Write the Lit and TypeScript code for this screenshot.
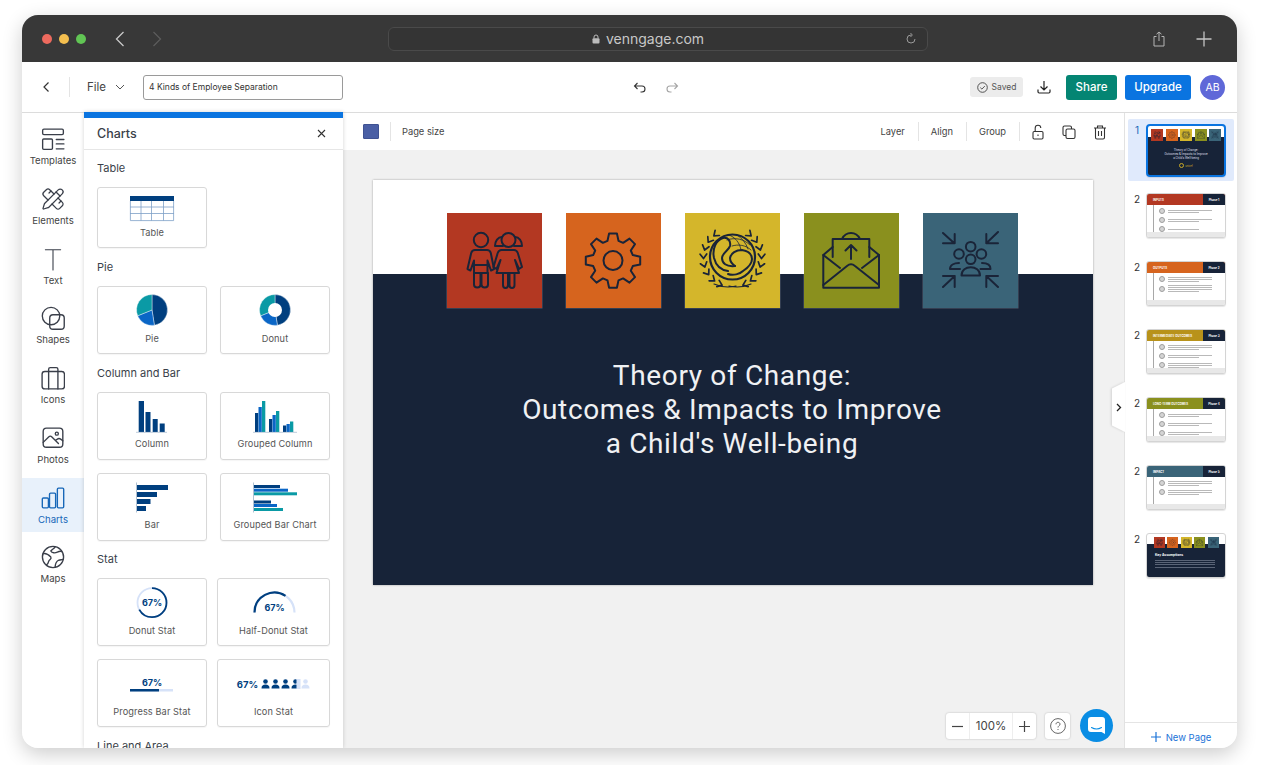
import { LitElement, html, css, svg } from "lit";
import { customElement } from "lit/decorators.js";

const NAVY = "#003f7f";
const BLUE = "#0a66c6";
const TEAL = "#0a9aa5";
const INK = "#1a2438";

function gearPath(cx: number, cy: number) {
  const pts: string[] = [];
  for (let i = 0; i < 8; i++) {
    const a = (i * Math.PI) / 4 - Math.PI / 2;
    const step = 0.2;
    const add = (r: number, d: number) =>
      pts.push(`${(cx + r * Math.cos(a + d)).toFixed(1)} ${(cy + r * Math.sin(a + d)).toFixed(1)}`);
    add(20.5, -0.27);
    add(27.5, -step * 0.72);
    add(27.5, step * 0.72);
    add(20.5, 0.27);
  }
  return "M" + pts.join("L") + "Z";
}

function laurel(s: number) {
  const cx = 47.5;
  const cy = 45;
  const r = 29;
  let d = "";
  for (let deg = -50; deg <= 72; deg += 17) {
    const a = (deg * Math.PI) / 180;
    const px = cx + s * r * Math.cos(a);
    const py = cy + r * Math.sin(a);
    const tx = s * Math.sin(a);
    const ty = -Math.cos(a);
    const nx = s * Math.cos(a);
    const ny = Math.sin(a);
    for (const k of [0.75, -0.75]) {
      const dx = tx + k * nx;
      const dy = ty + k * ny;
      const l = Math.hypot(dx, dy);
      d += `M${px.toFixed(1)} ${py.toFixed(1)}l${((dx / l) * 5.5).toFixed(1)} ${((dy / l) * 5.5).toFixed(1)}`;
    }
  }
  return svg`<path d=${d} stroke-width="1.700"/>`;
}

const slideIcons = [
  {
    bg: "#b33822",
    art: svg`
      <circle cx="34" cy="27" r="7.200"/>
      <path d="M28 37h12c2 0 3.200 1 3.800 3L47 56l-3 1.500-3.500-10V60H27V47.500l-3.500 10-3-1.500 3.700-16c.6-2 1.800-3 3.800-3z"/>
      <path d="M27 52h13.500M27 60v11.500c0 4 6.500 4 6.500 0V61M34.500 61v10.500c0 4 6.500 4 6.500 0V60"/>
      <circle cx="61.500" cy="27" r="7"/>
      <path d="M55 24c-4 0-7 4-7 9h8M68 24c4 0 7 4 7 9h-8"/>
      <path d="M56 37h11c2 0 3 1 3.800 3l4.200 14-3 2-4-9 4 13H49.500l4-13-4 9-3-2 4.200-14c.8-2 2-3 3.800-3z"/>
      <path d="M56 60v12c0 4 5 4 5 0V60M62.500 60v12c0 4 5 4 5 0V60"/>`,
  },
  {
    bg: "#d6641e",
    art: svg`<path d="${gearPath(47, 47.6)}"/><circle cx="47" cy="47.600" r="9.500"/>`,
  },
  {
    bg: "#d4b62b",
    art: svg`
      <circle cx="47.500" cy="44" r="22.500" stroke-width="2.200"/>
      <path stroke-width="2" d="M43 58c-7-1-12-5-14-13-2-9 2-18 9-20 5-1 8 3 7 8-1 4-8 7-8 12 0 5 4 9 13 8"/>
      <path stroke-width="2" d="M50 53c-3-2-5-5-5-8 1-5 6-8 12-8 6 1 10 4 10 9 0 5-3 8-9 12-3 3-10 5-15 3"/>
      <path stroke-width=".8" d="M44 22c6 2 11 8 12 15M52 22c5 3 9 8 11 14M42 27c8-3 17-1 23 5M47 33c6-2 14-1 19 4"/>
      ${laurel(-1)}${laurel(1)}
      <path stroke-width="1.200" d="M29 71c7 3 14 4 22 2M66 71c-7 3-14 4-22 2"/>`,
  },
  {
    bg: "#8a901e",
    art: svg`
      <path d="M19.300 42v32.700H75V42M19.300 42l9.400-8M75 42l-9.700-8"/>
      <path d="M19.300 72L43 53c3-2.500 5-2.500 8 0l24 19M19.300 42L36 55M75 42L58 55"/>
      <path d="M28.700 44V26h36.600v18M38 26c4-8 14-8 18 0"/>
      <path d="M47 46V32M41.500 37.500L47 32l5.500 5.500"/>`,
  },
  {
    bg: "#3a6478",
    art: svg`
      <circle cx="47.700" cy="33.700" r="4.800"/><circle cx="36" cy="41" r="4.800"/><circle cx="58.400" cy="41" r="4.800"/><circle cx="47.700" cy="46.300" r="4.800"/>
      <path d="M38.500 62.500c0-11 18.500-11 18.500 0zM36 50c-5 0-9 2-9 6h10M59 50c5 0 8.500 2 8.500 6h-10"/>
      <path d="M20 20l11 10M31.700 21v9.300H20M75 19L63.300 30.300M63.300 21v9.300H75M20 74l11.700-11M20 63h11.700v11M75 74L63.300 63M75 63H63.300v11"/>`,
  },
];

function slideIcon(i: number, size: number) {
  const ic = slideIcons[i];
  return html`<svg class="sicon" style="background:${ic.bg}" width=${size} height=${size} viewBox="0 0 95 95" fill="none" stroke=${INK} stroke-width="2" stroke-linejoin="round" stroke-linecap="round">${ic.art}</svg>`;
}

const side = [
  { label: "Templates", art: svg`<rect x="1.500" y="2" width="19" height="5" rx="1.200"/><rect x="1.500" y="11" width="9" height="9.500" rx="1"/><path d="M14 11.500h7M14 15.500h7M14 20h7"/>`, vb: "0 0 22 22" },
  { label: "Elements", art: svg`<g transform="scale(.96)"><path d="M13 7 8.700 2.700a2.410 2.410 0 0 0-3.400 0L2.700 5.300a2.410 2.410 0 0 0 0 3.400L7 13"/><path d="m8 6 2-2"/><path d="m18 16 2-2"/><path d="m17 11 4.300 4.300c.94.94.94 2.460 0 3.400l-2.600 2.600c-.94.94-2.460.94-3.400 0L11 17"/><path d="M21.174 6.812a1 1 0 0 0-3.986-3.987L3.842 16.174a2 2 0 0 0-.5.83l-1.321 4.352a.5.5 0 0 0 .623.622l4.353-1.320a2 2 0 0 0 .83-.497z"/><path d="m15 5 4 4"/></g>`, vb: "0 0 23 23" },
  { label: "Text", art: svg`<path d="M4 2.500h14M11 2.500v18.500"/>`, vb: "0 0 22 22", thin: true },
  { label: "Shapes", art: svg`<circle cx="9.200" cy="9.200" r="8"/><rect x="8" y="8" width="13.300" height="13.300" rx="3"/>`, vb: "0 0 22 22" },
  { label: "Icons", art: svg`<rect x="1" y="5" width="20.500" height="16" rx="2.500"/><path d="M7 5v16M15.500 5v16M7 5V3c0-1 .6-1.500 1.500-1.500h5.500c1 0 1.500.5 1.500 1.500v2"/>`, vb: "0 0 22 22" },
  { label: "Photos", art: svg`<rect x="2" y="2" width="18" height="17.500" rx="3"/><path d="M2 15l5-5c1-1 2-1 3 0l6 6 M13.500 13l1.500-1c1-.7 2-.7 3 0l2 1.500"/><circle cx="14.500" cy="7" r="1.400"/>`, vb: "0 0 22 22" },
  { label: "Charts", art: svg`<rect x="1.200" y="11" width="5.600" height="9" rx="1"/><rect x="7.800" y="6.500" width="5.600" height="13.500" rx="1"/><rect x="15" y="2" width="5.800" height="18" rx="1"/>`, vb: "0 0 22 22", active: true },
  { label: "Maps", art: svg`<circle cx="11" cy="11" r="9.700"/><path d="M2 8c3-1 5 1 7 3 1 2-1 2-2 4-.5 2-1 3-2 3M13 1.500c-1 2-3 2.500-4 4 1 2 4 2 6 1 2-1 3-1 4-.5M13 20.500c0-3 .5-5 3-6.500 2-1 3.500 0 4.500-1"/>`, vb: "0 0 22 22" },
];

type Card = { label: string; h: number; art: unknown; foot?: number };

function axisBars(list: [number, number, number, number, string][]) {
  return list.map(([x, y, w, h, c]) => svg`<rect x=${x} y=${y} width=${w} height=${h} fill=${c}/>`);
}

function wedge(cx: number, cy: number, r: number, a0: number, a1: number) {
  const p = (a: number) => `${(cx + r * Math.sin((a * Math.PI) / 180)).toFixed(2)} ${(cy - r * Math.cos((a * Math.PI) / 180)).toFixed(2)}`;
  return `M${cx} ${cy}L${p(a0)}A${r} ${r} 0 ${a1 - a0 > 180 ? 1 : 0} 1 ${p(a1)}Z`;
}

function person(x: number, c: string) {
  return svg`<g transform="translate(${x} 0)" fill=${c}><circle cx="4" cy="2.500" r="2.300"/><path d="M0 9.500c0-3 1.500-4 4-4s4 1 4 4z"/></g>`;
}

const pieArt = (cx: number, hole: boolean) => svg`
  <path d="${wedge(cx, 23, 15.5, 0, 171)}" fill=${NAVY} stroke="#fff" stroke-width=".4"/>
  <path d="${wedge(cx, 23, 15.5, 171, 248)}" fill=${BLUE} stroke="#fff" stroke-width=".4"/>
  <path d="${wedge(cx, 23, 15.5, 248, 360)}" fill=${TEAL} stroke="#fff" stroke-width=".4"/>
  ${hole ? svg`<circle cx=${cx} cy="23" r="7" fill="#fff"/>` : ""}`;

const statText = (x: number, y: number, size = 9) =>
  svg`<text x=${x} y=${y} text-anchor="middle" font-family="Inter, sans-serif" font-weight="700" font-size=${size} fill=${NAVY}>67%</text>`;

const groups: { title: string; cols: string; tight?: boolean; first?: boolean; cards: Card[] }[] = [
  {
    title: "Table",
    cols: "pair",
    first: true,
    cards: [
      {
        label: "Table",
        h: 61,
        art: svg`
          <rect x="32" y="8" width="44" height="5" fill=${NAVY}/>
          <path fill="none" stroke="#7d9fc6" stroke-width=".8" d="M32.400 13v19.600h43.200V13M32 19h44M32 25.500h44M43 13v19.600M53.500 13v19.600M65.500 13v19.600"/>`,
      },
    ],
  },
  {
    title: "Pie",
    cols: "pair",
    cards: [
      { label: "Pie", h: 68, art: pieArt(54, false) },
      { label: "Donut", h: 68, art: pieArt(54, true) },
    ],
  },
  {
    title: "Column and Bar",
    cols: "pair",
    cards: [
      {
        label: "Column",
        h: 68,
        foot: 23,
        art: svg`${axisBars([
          [40.7, 8, 5.3, 31, NAVY],
          [47.5, 19, 5, 20, NAVY],
          [54.7, 26, 5, 13, NAVY],
          [61.7, 30.5, 5, 8.5, NAVY],
        ])}<path d="M38 39.300h31" stroke="#8ea6bf" stroke-width=".6"/>`,
      },
      {
        label: "Grouped Column",
        h: 68,
        foot: 23,
        art: svg`${axisBars([
          [34, 20, 3.3, 19, NAVY],
          [37.5, 14, 3.3, 25, BLUE],
          [41, 8, 3.3, 31, TEAL],
          [48, 26, 3.3, 13, NAVY],
          [51.500, 22, 3.3, 17, BLUE],
          [55, 18, 3.3, 21, TEAL],
          [62, 32.5, 3.3, 6.5, NAVY],
          [65.500, 31, 3.3, 8, BLUE],
          [69, 28.500, 3.3, 10.5, TEAL],
        ])}<path d="M32 39.300h44" stroke="#8ea6bf" stroke-width=".6"/>`,
      },
      {
        label: "Bar",
        h: 68,
        foot: 23,
        art: svg`${axisBars([
          [39, 11, 31, 5, NAVY],
          [39, 18, 20, 5, NAVY],
          [39, 25, 13.5, 5, NAVY],
          [39, 32, 9, 5, NAVY],
        ])}<path d="M38.500 8.500v30" stroke="#8ea6bf" stroke-width=".7"/>`,
      },
      {
        label: "Grouped Bar Chart",
        h: 68,
        foot: 23,
        art: svg`${axisBars([
          [33, 11, 26, 3, NAVY],
          [33, 14.7, 34, 3, BLUE],
          [33, 18.300, 43, 3, TEAL],
          [33, 26.500, 17, 3, NAVY],
          [33, 30, 23, 3, BLUE],
          [33, 34, 29, 3, TEAL],
        ])}<path d="M32.500 8.500v30" stroke="#8ea6bf" stroke-width=".7"/>`,
      },
    ],
  },
  {
    title: "Stat",
    cols: "stat",
    tight: true,
    cards: [
      {
        label: "Donut Stat",
        h: 68,
        art: svg`
          <circle cx="54" cy="23.700" r="14.500" fill="none" stroke="#d6e2f8" stroke-width="1.800"/>
          <circle cx="54" cy="23.700" r="14.500" fill="none" stroke=${NAVY} stroke-width="1.800" pathLength="100" stroke-dasharray="67 33" transform="rotate(-90 54 23.700)"/>
          ${statText(54, 27)}`,
      },
      {
        label: "Half-Donut Stat",
        h: 68,
        art: svg`
          <path d="M35 33.500a20 20 0 0 1 40 0" fill="none" stroke="#d6e2f8" stroke-width="2.200"/>
          <path d="M35 33.500a20 20 0 0 1 31-16.700" fill="none" stroke=${NAVY} stroke-width="2.200"/>
          ${statText(55, 31.500)}`,
      },
      {
        label: "Progress Bar Stat",
        h: 68,
        art: svg`
          <rect x="32" y="29" width="43" height="2.500" fill="#d6e2f8"/>
          <rect x="32" y="29" width="29" height="2.500" fill=${NAVY}/>
          ${statText(54, 25.500)}`,
      },
      {
        label: "Icon Stat",
        h: 68,
        art: svg`
          ${statText(28, 27.500, 9.5)}
          <g transform="translate(42 19)">
            ${person(0, NAVY)}${person(10, NAVY)}${person(20, NAVY)}${person(30, NAVY)}
            <rect x="35" y="0" width="4" height="10" fill="#d6e2f8"/>
            ${person(40, "#d6e2f8")}
          </g>`,
      },
    ],
  },
];

const thumbs = [
  { title: "INPUTS", color: "#b33822", phase: "Phase 1", rows: [2, 2, 1] },
  { title: "OUTPUTS", color: "#d6641e", phase: "Phase 2", rows: [3, 4] },
  { title: "INTERMEDIATE OUTCOMES", color: "#b8921a", phase: "Phase 3", rows: [3, 2, 3] },
  { title: "LONG-TERM OUTCOMES", color: "#8a901e", phase: "Phase 4", rows: [2, 2, 2] },
  { title: "IMPACT", color: "#3a6478", phase: "Phase 5", rows: [3, 3] },
];

@customElement("app-root")
export class AppRoot extends LitElement {
  static styles = css`
    :host {
      display: block;
      width: 1261px;
      height: 765px;
      background: #fff;
      font-family: Inter, "Noto Sans", sans-serif;
      color: #3a3f4a;
      overflow: hidden;
    }
    .page { padding: 15px 24px 17px 22px; height: 733px; }
    .win {
      height: 733px;
      border-radius: 16px;
      overflow: hidden;
      display: flex;
      flex-direction: column;
      background: #f1f1f1;
      box-shadow: 0 6px 20px rgba(0, 0, 0, 0.2);
      position: relative;
    }
    .chrome {
      height: 47px;
      flex: none;
      background: #383838;
      display: flex;
      align-items: center;
      padding-left: 20px;
      box-sizing: border-box;
    }
    .dot { width: 10px; height: 10px; border-radius: 50%; margin-right: 7px; }
    .nav { margin-left: 22px; display: block; }
    .nav + .nav { margin-left: 27px; }
    .url {
      margin-left: 226px;
      width: 540px;
      height: 24px;
      box-sizing: border-box;
      border: 1px solid #4a4a4a;
      border-radius: 6px;
      background: #343434;
      display: flex;
      align-items: center;
      justify-content: center;
      position: relative;
      color: #c8c8c8;
      font-size: 14px;
      gap: 6px;
      padding-right: 20px;
    }
    .url .reload { position: absolute; right: 9px; top: 4px; }
    .chrome-end { margin-left: 224px; display: flex; align-items: center; gap: 30px; }

    .top {
      height: 51px;
      flex: none;
      background: #fff;
      border-bottom: 1px solid #dcdcdc;
      box-sizing: border-box;
      display: flex;
      align-items: center;
      padding-left: 20px;
    }
    .tsep { width: 1px; height: 20px; background: #e4e4e4; margin: 0 17px 0 18px; }
    .file { font-size: 11.5px; color: #444; margin-right: 9px; }
    .doc {
      margin-left: 18px;
      width: 200px;
      height: 25px;
      box-sizing: border-box;
      border: 1px solid #9a9a9a;
      border-radius: 3px;
      display: flex;
      align-items: center;
      padding-left: 5px;
      font-size: 8.5px;
      color: #333;
    }
    .undo { margin-left: 290px; display: flex; gap: 18px; }
    .right { margin-left: auto; display: flex; align-items: center; padding-right: 12px; }
    .saved {
      width: 53px;
      height: 20px;
      background: #ececec;
      border-radius: 3px;
      display: flex;
      align-items: center;
      justify-content: center;
      gap: 4px;
      font-size: 8.5px;
      color: #555;
    }
    .dl { margin: 0 15px 0 14px; display: block; }
    .btn {
      height: 25px;
      border-radius: 3px;
      color: #fff;
      font-size: 11.5px;
      font-weight: 500;
      display: flex;
      align-items: center;
      justify-content: center;
    }
    .share { width: 51px; background: #048573; margin-right: 8px; }
    .upgrade { width: 66px; background: #0a74e0; margin-right: 9px; }
    .avatar {
      width: 25px;
      height: 25px;
      border-radius: 50%;
      background: #5f68d8;
      color: #fff;
      font-size: 10.5px;
      display: flex;
      align-items: center;
      justify-content: center;
    }

    .body { flex: 1; display: flex; min-height: 0; }
    .side {
      width: 62px;
      flex: none;
      background: #fff;
      padding-top: 6px;
      box-sizing: border-box;
      display: flex;
      flex-direction: column;
      gap: 5.75px;
    }
    .sitem {
      height: 54px;
      display: flex;
      flex-direction: column;
      align-items: center;
      justify-content: flex-end;
      padding-bottom: 6px;
      box-sizing: border-box;
      font-size: 9.6px;
      line-height: 12px;
      color: #444;
      gap: 4px;
    }
    .sitem.on { background: #e8f1fb; color: #1767b8; }
    .sitem svg { display: block; }

    .panel {
      width: 259px;
      flex: none;
      background: #fff;
      border-top: 6px solid #0a74e0;
      box-sizing: border-box;
      overflow: hidden;
      box-shadow: 0 0 4px rgba(0, 0, 0, 0.18);
      position: relative;
      z-index: 1;
      margin-top: -1px;
    }
    .phead {
      height: 31px;
      border-bottom: 1px solid #e6e6e6;
      display: flex;
      align-items: center;
      justify-content: space-between;
      padding: 0 17px 0 13px;
      font-size: 12.5px;
      font-weight: 500;
      color: #3a3f4a;
    }
    .pbody { padding: 0 13px; }
    .gt { font-size: 11px; color: #3a3f4a; line-height: 14px; margin: 12px 0 12px; }
    .gt.first, .gt.tight { margin-top: 11px; }
    .grid { display: grid; grid-template-columns: 110px 110px; gap: 13px; row-gap: 13px; }
    .grid.stat { grid-template-columns: 110px 113px; column-gap: 10px; }
    .card {
      border: 1px solid #d8d8d8;
      border-radius: 3px;
      box-sizing: border-box;
      position: relative;
      overflow: hidden;
      box-shadow: 0 1px 1px rgba(0, 0, 0, 0.04);
    }
    .card svg { display: block; width: 100%; }
    .card span {
      display: block;
      text-align: center;
      font-size: 9.2px;
      line-height: 12px;
      color: #555;
      letter-spacing: 0.1px;
    }

    .main { flex: 1; min-width: 0; display: flex; flex-direction: column; position: relative; }
    .ctool {
      height: 37px;
      flex: none;
      background: #fff;
      display: flex;
      align-items: center;
      padding-left: 20px;
      font-size: 9.3px;
      color: #444;
    }
    .swatch { width: 16px; height: 15px; background: #4a5fa5; border-radius: 1px; border: 1px solid #3f5292; box-sizing: border-box; }
    .csep { width: 1px; height: 19px; background: #e4e4e4; }
    .ctool .right { padding-right: 16px; }
    .ctool .lbl { padding: 0 13px 0 12px; }
    .ctool svg { display: block; }
    .tools { display: flex; gap: 15px; padding-left: 10px; }
    .stage { flex: 1; padding: 30px 0 0 30px; }
    .slide {
      width: 720px;
      height: 405px;
      box-sizing: border-box;
      background: linear-gradient(#fff 94px, #172338 94px);
      box-shadow: 0 0 2px rgba(0, 0, 0, 0.35);
      padding: 33px 0 0 74px;
      color: #f0f1f3;
    }
    .srow { display: flex; gap: 24px; }
    .sicon { display: block; flex: none; box-shadow: 0 0 0 .5px rgba(255, 255, 255, 0.25); }
    .stitle {
      margin: 51px 0 0 -76px;
      text-align: center;
      font-family: Roboto, sans-serif;
      font-size: 28px;
      line-height: 34px;
      letter-spacing: 0.65px;
    }

    .rail {
      width: 113px;
      flex: none;
      background: #fff;
      border-left: 1px solid #e2e2e2;
      box-sizing: border-box;
      display: flex;
      flex-direction: column;
      position: relative;
    }
    .tabs { flex: 1; padding: 6px 3px 0 3px; }
    .tr { display: flex; margin-bottom: 23px; height: 45px; }
    .tr.first { background: #e0eafc; height: 62px; border-radius: 2px; padding-top: 5px; box-sizing: border-box; margin-bottom: 12px; }
    .tr b { width: 18px; font-weight: 400; font-size: 10px; color: #333; text-align: center; padding-top: 0; line-height: 12px; }
    .tr.first b { color: #1767b8; }
    .th {
      width: 80px;
      height: 45px;
      box-sizing: border-box;
      border: 1px solid #d4d4d4;
      border-radius: 3px;
      overflow: hidden;
      background: #fff;
      display: flex;
      flex-direction: column;
      box-shadow: 0 1px 1px rgba(0, 0, 0, 0.1);
      flex: none;
    }
    .thd { height: 11px; flex: none; display: flex; align-items: center; color: #fff; font-size: 2.9px; font-weight: 700; padding-left: 6px; }
    .thd i { margin-left: auto; width: 22px; height: 100%; background: #172338; font-style: normal; display: flex; align-items: center; justify-content: center; font-size: 2.9px; }
    .tbd { flex: 1; margin-left: 6px; border-left: 1px solid #a8a8a8; padding: 3px 0 0 5px; display: flex; flex-direction: column; gap: 3px; }
    .trow { display: flex; gap: 3px; align-items: center; }
    .tdot { width: 6px; height: 6px; border-radius: 50%; border: 1px solid #9f9f9f; background: #d4d4d4; box-sizing: border-box; flex: none; }
    .tl { display: flex; flex-direction: column; gap: 1px; width: 44px; }
    .tl u { display: block; height: 1px; background: #b9b9b9; }
    .tft { height: 5px; background: #e8e8e8; flex: none; }
    .th.dark { background: linear-gradient(#fff 10px, #172338 10px); color: #fff; }
    .first .th { height: 53px; border: 2px solid #0a74e0; border-radius: 4px; width: 80px; background: linear-gradient(#fff 11px, #172338 11px); }
    .mini { display: flex; gap: 2.500px; padding-top: 3px; justify-content: center; }
    .mini .sicon { box-shadow: none; }
    .mt { font-family: Roboto, sans-serif; font-size: 3px; line-height: 4px; text-align: center; margin-top: 7px; color: #d8dbe0; }
    .logo { display: flex; align-items: center; justify-content: center; gap: 1px; margin-top: 3px; font-size: 2.6px; color: #c9a926; }
    .logo em { display: block; width: 5px; height: 5px; border: 1px solid #c9a926; border-radius: 50%; box-sizing: border-box; }
    .ka { font-size: 3.3px; font-weight: 700; padding: 5px 0 3px 8px; }
    .kl { margin: 0 10px 1.500px 8px; height: .7px; background: #5a6477; }
    .newp {
      height: 26px;
      flex: none;
      border-top: 1px solid #e4e4e4;
      display: flex;
      align-items: center;
      justify-content: center;
      gap: 5px;
      color: #1a73d8;
      font-size: 9.5px;
      padding-top: 3px;
      box-sizing: border-box;
    }
    .handle {
      position: absolute;
      left: -13px;
      top: 269px;
      filter: drop-shadow(-1px 0 1px rgba(0, 0, 0, 0.12));
    }
    .handle div {
      width: 13px;
      height: 50px;
      background: #fff;
      clip-path: polygon(100% 0, 0 13%, 0 87%, 100% 100%);
      display: flex;
      align-items: center;
      justify-content: center;
    }
    .zoom {
      position: absolute;
      left: 603px;
      top: 600px;
      height: 26px;
      display: flex;
      align-items: center;
      gap: 9px;
    }
    .zg {
      display: flex;
      height: 26px;
      width: 90px;
      background: #fff;
      border-radius: 3px;
      box-shadow: 0 0 2px rgba(0, 0, 0, 0.25);
      font-size: 11.5px;
      color: #444;
    }
    .zg div { display: flex; align-items: center; justify-content: center; }
    .zb { width: 23px; flex: none; }
    .zp { flex: 1; border-left: 1px solid #eee; border-right: 1px solid #eee; }
    .help {
      width: 25px;
      height: 26px;
      background: #fff;
      border-radius: 3px;
      box-shadow: 0 0 2px rgba(0, 0, 0, 0.25);
      display: flex;
      align-items: center;
      justify-content: center;
    }
    .chat {
      width: 33px;
      height: 33px;
      border-radius: 50%;
      background: #0a8de4;
      display: flex;
      align-items: center;
      justify-content: center;
      margin-left: 1px;
      margin-top: -1px;
    }
  `;

  private renderThumb(t: (typeof thumbs)[number]) {
    return html`<div class="th">
      <div class="thd" style="background:${t.color}">${t.title}<i>${t.phase}</i></div>
      <div class="tbd">
        ${t.rows.map(
          (n) => html`<div class="trow"><div class="tdot"></div>
            <div class="tl">${Array.from({ length: n }, (_, i) => html`<u style="width:${i === n - 1 ? 70 : 100}%"></u>`)}</div></div>`
        )}
      </div>
      <div class="tft"></div>
    </div>`;
  }

  render() {
    return html`<div class="page"><div class="win">
      <div class="chrome">
        <div class="dot" style="background:#ed6a5e"></div>
        <div class="dot" style="background:#f4bf4f"></div>
        <div class="dot" style="background:#61c554"></div>
        <svg class="nav" width="10" height="16" viewBox="0 0 10 16" fill="none" stroke="#c9c9c9" stroke-width="1.300"><path d="M8.500 1L1.500 8l7 7"/></svg>
        <svg class="nav" width="10" height="16" viewBox="0 0 10 16" fill="none" stroke="#5c5c5c" stroke-width="1.300"><path d="M1.500 1l7 7-7 7"/></svg>
        <div class="url">
          <svg width="8" height="10" viewBox="0 0 8 10"><path d="M2 4.500V3a2 2 0 0 1 4 0v1.500" fill="none" stroke="#bbb"/><rect x=".5" y="4.300" width="7" height="5.200" rx="1" fill="#bbb"/></svg>
          venngage.com
          <svg class="reload" width="14" height="14" viewBox="0 0 14 14" fill="none" stroke="#9a9a9a"><path d="M7 3a4 4 0 1 0 4 4M6.500 1L8.300 3 6.500 5"/></svg>
        </div>
        <div class="chrome-end">
          <svg width="14" height="16" viewBox="0 0 14 16" fill="none" stroke="#b4b4b4"><path d="M4.500 5.500H2v9.500h10V5.500H9.500M7 10V1M4.500 3.200L7 1l2.500 2.200"/></svg>
          <svg width="16" height="16" viewBox="0 0 16 16" fill="none" stroke="#c4c4c4" stroke-width="1.300"><path d="M8 .5v15M.5 8h15"/></svg>
        </div>
      </div>

      <div class="top">
        <svg width="9" height="12" viewBox="0 0 9 12" fill="none" stroke="#333" stroke-width="1.200"><path d="M6.500 1.500L2 6l4.500 4.500"/></svg>
        <div class="tsep"></div>
        <span class="file">File</span>
        <svg width="10" height="6" viewBox="0 0 10 6" fill="none" stroke="#555"><path d="M1 1l4 4 4-4"/></svg>
        <div class="doc">4 Kinds of Employee Separation</div>
        <div class="undo">
          <svg width="14" height="12" viewBox="0 0 14 12" fill="none" stroke="#333" stroke-width="1.100"><path d="M4.500 2L1.500 5l3 3M1.500 5H9a3 3 0 0 1 0 6H7.500"/></svg>
          <svg width="14" height="12" viewBox="0 0 14 12" fill="none" stroke="#a5a5a5" stroke-width="1.100"><path d="M9.500 2l3 3-3 3M12.500 5H5a3 3 0 0 0 0 6h1.500"/></svg>
        </div>
        <div class="right">
          <div class="saved">
            <svg width="11" height="11" viewBox="0 0 11 11" fill="none" stroke="#444" stroke-width=".9"><circle cx="5.500" cy="5.500" r="4.800"/><path d="M3.300 5.600l1.600 1.500 2.900-3"/></svg>
            Saved
          </div>
          <svg class="dl" width="14" height="14" viewBox="0 0 14 14" fill="none" stroke="#222" stroke-width="1.200"><path d="M7 1v8.500M3.500 6.500L7 10l3.500-3.500M1 9.500v2.300c0 .7.500 1.200 1.200 1.200h9.600c.7 0 1.200-.5 1.200-1.200V9.500"/></svg>
          <div class="btn share">Share</div>
          <div class="btn upgrade">Upgrade</div>
          <div class="avatar">AB</div>
        </div>
      </div>

      <div class="body">
        <div class="side">
          ${side.map(
            (s) => html`<div class="sitem ${s.active ? "on" : ""}">
              <svg width="24" height="24" viewBox=${s.vb} fill="none" stroke=${s.active ? "#1767b8" : "#3a3f4a"} stroke-width=${s.thin ? 1 : 1.250} stroke-linecap="round" stroke-linejoin="round">${s.art}</svg>
              ${s.label}
            </div>`
          )}
        </div>

        <div class="panel">
          <div class="phead">Charts
            <svg width="9" height="9" viewBox="0 0 9 9" fill="none" stroke="#333" stroke-width="1.100"><path d="M1 1l7 7M8 1L1 8"/></svg>
          </div>
          <div class="pbody">
            ${groups.map(
              (g) => html`<div class="gt ${g.first ? "first" : ""} ${g.tight ? "tight" : ""}">${g.title}</div>
                <div class="grid ${g.cols}">
                  ${g.cards.map(
                    (c) => html`<div class="card" style="height:${c.h}px">
                      <svg height=${c.h - (c.foot ?? 22)} viewBox="0 0 108 ${c.h - (c.foot ?? 22)}">${c.art}</svg>
                      <span>${c.label}</span>
                    </div>`
                  )}
                </div>`
            )}
            <div class="gt">Line and Area</div>
          </div>
        </div>

        <div class="main">
          <div class="ctool">
            <div class="swatch"></div>
            <div class="csep" style="margin:0 11px"></div>
            Page size
            <div class="right">
              <span class="lbl">Layer</span><div class="csep"></div>
              <span class="lbl">Align</span><div class="csep"></div>
              <span class="lbl">Group</span><div class="csep"></div>
              <div class="tools">
                <svg width="16" height="16" viewBox="0 0 16 16" fill="none" stroke="#333" stroke-width="1.100"><rect x="3" y="7.500" width="10" height="7.500" rx="1.200"/><path d="M5.200 7.500V4a2.800 2.800 0 0 1 5.600 0M8 10.500v1.500"/></svg>
                <svg width="16" height="16" viewBox="0 0 16 16" fill="none" stroke="#333" stroke-width="1.100"><rect x="5" y="5" width="9" height="9.500" rx="1.500"/><path d="M5 11.500H3.500A1.500 1.500 0 0 1 2 10V3.500A1.500 1.500 0 0 1 3.500 2H9a1.500 1.500 0 0 1 1.500 1.500V5"/></svg>
                <svg width="16" height="16" viewBox="0 0 16 16" fill="none" stroke="#333" stroke-width="1.100"><path d="M2 4h12M5.500 4V2h5v2M3.500 4v9.500c0 .8.500 1.500 1.500 1.500h6c1 0 1.500-.7 1.500-1.500V4M6.500 7v5M9.500 7v5"/></svg>
              </div>
            </div>
          </div>
          <div class="stage">
            <div class="slide">
              <div class="srow">${slideIcons.map((_, i) => slideIcon(i, 95))}</div>
              <div class="stitle">Theory of Change:<br />Outcomes &amp; Impacts to Improve<br />a Child's Well-being</div>
            </div>
          </div>
          <div class="zoom">
            <div class="zg">
              <div class="zb"><svg width="11" height="11" viewBox="0 0 11 11" stroke="#444" stroke-width="1.200"><path d="M0 5.500h11"/></svg></div>
              <div class="zp">100%</div>
              <div class="zb"><svg width="11" height="11" viewBox="0 0 11 11" stroke="#444" stroke-width="1.200"><path d="M0 5.500h11M5.500 0v11"/></svg></div>
            </div>
            <div class="help">
              <svg width="16" height="16" viewBox="0 0 16 16" fill="none" stroke="#555" stroke-width=".9"><circle cx="8" cy="8" r="7.400"/><path d="M6 6.300c0-1.200.9-2 2-2s2 .8 2 1.900c0 1.500-2 1.600-2 3.300M8 11v1"/></svg>
            </div>
            <div class="chat">
              <svg width="17" height="17" viewBox="0 0 17 17"><path d="M3 0h11a3 3 0 0 1 3 3v14l-3.500-2H3a3 3 0 0 1-3-3V3a3 3 0 0 1 3-3z" fill="#fff"/><path d="M3.500 10.500c3 1.800 7 1.800 10 0" fill="none" stroke="#0a8de4" stroke-width="1.100" stroke-linecap="round"/></svg>
            </div>
          </div>
        </div>

        <div class="rail">
          <div class="handle"><div>
            <svg width="6" height="9" viewBox="0 0 6 9" fill="none" stroke="#222" stroke-width="1.300"><path d="M1 1l3.500 3.500L1 8"/></svg>
          </div></div>
          <div class="tabs">
            <div class="tr first"><b>1</b>
              <div class="th dark">
                <div class="mini">${slideIcons.map((_, i) => slideIcon(i, 12))}</div>
                <div class="mt">Theory of Change:<br />Outcomes &amp; Impacts to Improve<br />a Child's Well-being</div>
                <div class="logo"><em></em>unicef</div>
              </div>
            </div>
            ${thumbs.map((t) => html`<div class="tr"><b>2</b>${this.renderThumb(t)}</div>`)}
            <div class="tr"><b>2</b>
              <div class="th dark">
                <div class="mini">${slideIcons.map((_, i) => slideIcon(i, 11))}</div>
                <div class="ka">Key Assumptions</div>
                <div class="kl"></div><div class="kl"></div><div class="kl"></div><div class="kl"></div>
              </div>
            </div>
          </div>
          <div class="newp">
            <svg width="10" height="10" viewBox="0 0 10 10" stroke="#1a73d8" stroke-width="1.200"><path d="M5 0v10M0 5h10"/></svg>
            New Page
          </div>
        </div>
      </div>
    </div></div>`;
  }
}
